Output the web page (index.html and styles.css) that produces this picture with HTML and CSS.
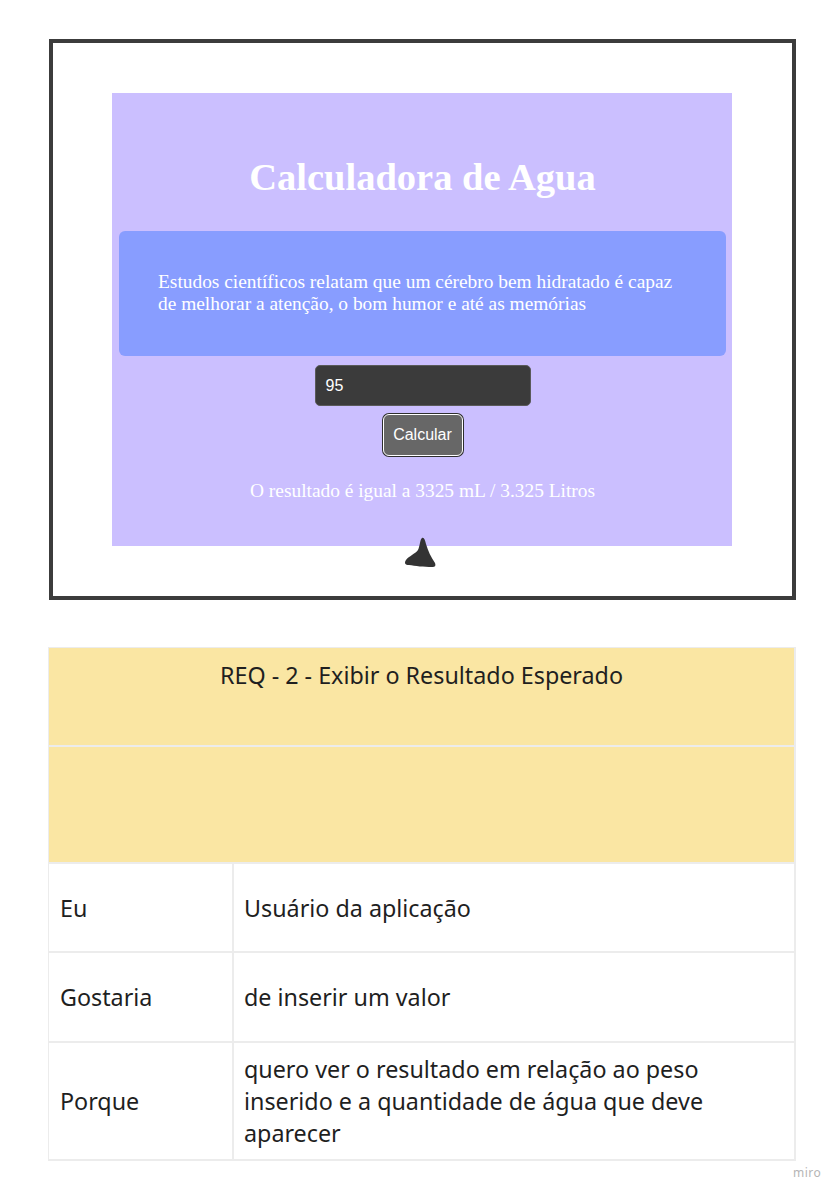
FILE: index.html
```html
<!DOCTYPE html>
<html lang="pt">
<head>
<meta charset="utf-8">
<title>Calculadora de Agua</title>
<link rel="stylesheet" href="styles.css">
</head>
<body>
<div class="frame">
  <div class="panel">
    <h1 class="title">Calculadora de Agua</h1>
    <div class="info">
      <p>Estudos científicos relatam que um cérebro bem hidratado é capaz<br>de melhorar a atenção, o bom humor e até as memórias</p>
    </div>
    <div class="form">
      <div class="input">95</div>
      <div class="btn">Calcular</div>
    </div>
    <p class="result">O resultado é igual a 3325 mL / 3.325 Litros</p>
  </div>
  <svg class="pointer" width="34" height="31" viewBox="0 0 34 31"><path d="M18 1 C20 0 21 3 22 7 C24 14 27 20 31 26 C32 29 31 30 28 30 C20 30 11 29 5 28 C1 28 0 26 2 23 C5 19 11 17 14 13 C16 9 16 2 18 1 Z" fill="#333"/></svg>
</div>

<div class="table">
  <div class="row head"><div class="cell full">REQ - 2 - Exibir o Resultado Esperado</div></div>
  <div class="row blank"><div class="cell full"></div></div>
  <div class="row r1"><div class="cell key">Eu</div><div class="cell val">Usuário da aplicação</div></div>
  <div class="row r2"><div class="cell key">Gostaria</div><div class="cell val">de inserir um valor</div></div>
  <div class="row r3"><div class="cell key">Porque</div><div class="cell val">quero ver o resultado em relação ao peso inserido e a quantidade de água que deve aparecer</div></div>
</div>
<div class="brand">miro</div>
</body>
</html>
```
FILE: styles.css
```css
html, body {
  margin: 0;
  padding: 0;
  background: #ffffff;
}
body {
  width: 839px;
  height: 1191px;
  overflow: hidden;
  font-family: "Noto Sans", "Open Sans", sans-serif;
}
.frame {
  box-sizing: border-box;
  width: 747px;
  height: 561px;
  margin: 39px 0 0 49px;
  border: 4px solid #3c3c3c;
  padding: 50px 0 0 59px;
  position: relative;
}
.panel {
  width: 620px;
  height: 453px;
  background: #cbbfff;
  box-sizing: border-box;
  padding: 0 6px 0 7px;
  display: flex;
  flex-direction: column;
  align-items: center;
  color: #fff;
  font-family: "Liberation Serif", "Times New Roman", serif;
}
.title {
  margin: 60px 0 0 0;
  font-size: 38.5px;
  line-height: 48px;
  font-weight: bold;
  height: 78px;
}
.info {
  align-self: stretch;
  height: 125px;
  background: #889dff;
  border-radius: 6px;
  box-sizing: border-box;
  padding: 40px 0 0 39px;
}
.info p {
  margin: 0;
  font-size: 19.4px;
  line-height: 22px;
}
.form {
  margin-top: 9px;
  display: flex;
  flex-direction: column;
  align-items: center;
  gap: 8px;
}
.input {
  box-sizing: border-box;
  width: 216px;
  height: 41px;
  background: #3b3b3b;
  border: 1px solid #5a5a5a;
  border-radius: 5px;
  padding: 0 10px;
  font-family: "Liberation Sans", Arial, sans-serif;
  font-size: 16px;
  line-height: 39px;
  color: #fff;
}
.btn {
  box-sizing: border-box;
  width: 80px;
  height: 42px;
  background: #676767;
  border: 1.5px solid #ffffff;
  box-shadow: 0 0 0 1px #2e2e2e;
  border-radius: 6px;
  font-family: "Liberation Sans", Arial, sans-serif;
  font-size: 16px;
  line-height: 39px;
  text-align: center;
  color: #fff;
}
.result {
  margin: 24px 0 0 0;
  font-size: 19.4px;
  line-height: 22px;
}
.pointer {
  position: absolute;
  left: 351px;
  top: 494px;
}
.table {
  box-sizing: border-box;
  width: 748px;
  margin: 47px 0 0 48px;
  border-top: 1px solid #ececec;
  border-left: 1px solid #ececec;
  color: #1f1f1f;
  font-size: 23.3px;
}
.row {
  display: flex;
}
.cell {
  box-sizing: border-box;
  border-right: 2px solid #ececec;
  border-bottom: 2px solid #ececec;
  display: flex;
  align-items: center;
  line-height: 32px;
}
.full {
  flex: 1;
  background: #fae6a3;
  justify-content: center;
}
.head .cell {
  height: 99px;
  align-items: flex-start;
  padding-top: 11px;
}
.blank .cell {
  height: 117px;
}
.key {
  width: 185px;
  padding-left: 11px;
}
.val {
  flex: 1;
  padding: 0 20px 0 10px;
}
.r1 .cell { height: 89px; }
.r2 .cell { height: 90px; }
.r3 .cell { height: 118px; }
.brand {
  margin: 3px 0 0 793px;
  font-size: 12px;
  color: #b5b5b5;
  letter-spacing: 0.5px;
}
```
